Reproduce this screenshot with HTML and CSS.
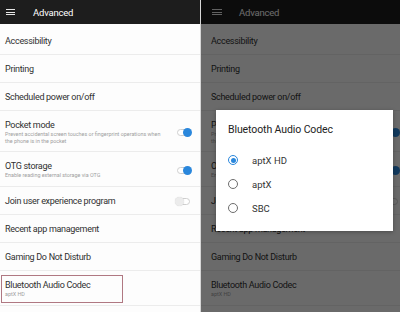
FILE: index.html
```html
<!DOCTYPE html>
<html lang="en">
<head>
    <meta charset="UTF-8">
    <title>Advanced - Bluetooth Audio Codec</title>
    <link rel="stylesheet" href="styles.css">
</head>
<body>
    <div class="shots">
        <!-- left: settings list -->
        <div class="phone">
            <div class="appbar">
                <span class="menu"><i></i><i></i><i></i></span>
                <span class="title">Advanced</span>
            </div>
            <ul class="list">
                <li class="row"><div class="text"><div class="label">Accessibility</div></div></li>
                <li class="row"><div class="text"><div class="label">Printing</div></div></li>
                <li class="row"><div class="text"><div class="label">Scheduled power on/off</div></div></li>
                <li class="row tall">
                    <div class="text">
                        <div class="label">Pocket mode</div>
                        <div class="sub">Prevent accidental screen touches or fingerprint operations when<br>the phone is in the pocket</div>
                    </div>
                    <span class="toggle on"></span>
                </li>
                <li class="row">
                    <div class="text">
                        <div class="label">OTG storage</div>
                        <div class="sub">Enable reading external storage via OTG</div>
                    </div>
                    <span class="toggle on"></span>
                </li>
                <li class="row">
                    <div class="text"><div class="label">Join user experience program</div></div>
                    <span class="toggle"></span>
                </li>
                <li class="row"><div class="text"><div class="label">Recent app management</div></div></li>
                <li class="row"><div class="text"><div class="label">Gaming Do Not Disturb</div></div></li>
                <li class="row">
                    <div class="text">
                        <div class="label">Bluetooth Audio Codec</div>
                        <div class="sub">aptX HD</div>
                    </div>
                    <span class="highlight"></span>
                </li>
            </ul>
        </div>

        <div class="split"></div>

        <!-- right: same list with the codec dialog open -->
        <div class="phone dim">
            <div class="appbar">
                <span class="menu"><i></i><i></i><i></i></span>
                <span class="title">Advanced</span>
            </div>
            <ul class="list">
                <li class="row"><div class="text"><div class="label">Accessibility</div></div></li>
                <li class="row"><div class="text"><div class="label">Printing</div></div></li>
                <li class="row"><div class="text"><div class="label">Scheduled power on/off</div></div></li>
                <li class="row tall">
                    <div class="text">
                        <div class="label">Pocket mode</div>
                        <div class="sub">Prevent accidental screen touches or fingerprint operations when<br>the phone is in the pocket</div>
                    </div>
                    <span class="toggle on"></span>
                </li>
                <li class="row">
                    <div class="text">
                        <div class="label">OTG storage</div>
                        <div class="sub">Enable reading external storage via OTG</div>
                    </div>
                    <span class="toggle on"></span>
                </li>
                <li class="row">
                    <div class="text"><div class="label">Join user experience program</div></div>
                    <span class="toggle"></span>
                </li>
                <li class="row"><div class="text"><div class="label">Recent app management</div></div></li>
                <li class="row"><div class="text"><div class="label">Gaming Do Not Disturb</div></div></li>
                <li class="row">
                    <div class="text">
                        <div class="label">Bluetooth Audio Codec</div>
                        <div class="sub">aptX HD</div>
                    </div>
                </li>
            </ul>
            <div class="scrim"></div>
            <div class="dialog">
                <div class="dialog-title">Bluetooth Audio Codec</div>
                <div class="option"><span class="radio checked"></span>aptX HD</div>
                <div class="option"><span class="radio"></span>aptX</div>
                <div class="option"><span class="radio"></span>SBC</div>
            </div>
        </div>
    </div>
</body>
</html>
```

FILE: styles.css
```css
* {
    box-sizing: border-box;
}
body {
    margin: 0;
    width: 400px;
    height: 312px;
    overflow: hidden;
    font-family: Roboto, "Liberation Sans", sans-serif;
    background: #fff;
}
.shots {
    display: flex;
    height: 312px;
}
.phone {
    position: relative;
    width: 200px;
    flex: none;
    background: #fdfdfd;
    overflow: hidden;
}
.phone.dim {
    width: 199px;
}
.split {
    width: 1px;
    background: #d6d6d6;
}
.appbar {
    height: 24px;
    background: #1d1d1d;
    color: #fff;
    display: flex;
    align-items: center;
    padding-left: 6px;
}
.menu {
    display: flex;
    flex-direction: column;
    gap: 1.5px;
    width: 9px;
    margin-right: 18px;
}
.menu i {
    display: block;
    height: 1px;
    background: #e6e6e6;
}
.title {
    font-size: 9.5px;
    letter-spacing: -0.2px;
}
.list {
    list-style: none;
    margin: 0;
    padding: 3px 0 0;
}
.row {
    position: relative;
    display: flex;
    align-items: center;
    padding: 9px 10px 7px 5px;
    border-bottom: 1px solid #ececec;
}
.row.tall {
    padding-bottom: 6px;
}
.text {
    flex: 1;
}
.label {
    font-size: 9px;
    line-height: 11px;
    color: #303030;
    letter-spacing: -0.3px;
}
.sub {
    font-size: 5.4px;
    line-height: 7px;
    color: #a0a0a0;
}
.toggle {
    position: relative;
    width: 13px;
    height: 7px;
    border: 1px solid #cfcfcf;
    border-radius: 4px;
    background: #fff;
    flex: none;
}
.toggle::after {
    content: "";
    position: absolute;
    top: -2px;
    left: -3px;
    width: 9px;
    height: 9px;
    border-radius: 50%;
    background: #ececec;
    box-shadow: 0 0 1px rgba(0,0,0,0.2);
}
.toggle.on::after {
    left: auto;
    right: -3px;
    background: #2a87dc;
    box-shadow: none;
}
.highlight {
    position: absolute;
    left: 1px;
    top: 4px;
    width: 122px;
    height: 28px;
    border: 1.5px solid #b07882;
}

/* right shot */
.dim .appbar {
    padding-left: 11px;
}
.dim .menu {
    width: 10px;
    margin-right: 17px;
}
.dim .row {
    padding-left: 10px;
    padding-right: 2px;
}
.scrim {
    position: absolute;
    inset: 0;
    background: rgba(0,0,0,0.58);
}
.dialog {
    position: absolute;
    left: 15px;
    top: 110px;
    width: 177px;
    height: 121px;
    background: #fff;
    box-shadow: 0 1px 4px rgba(0,0,0,0.3);
    padding: 14px 12px 0;
}
.dialog-title {
    font-size: 10.5px;
    line-height: 12px;
    color: #222;
    letter-spacing: -0.1px;
    margin-bottom: 12px;
}
.option {
    display: flex;
    align-items: center;
    height: 24px;
    font-size: 9.5px;
    color: #333;
}
.radio {
    width: 10px;
    height: 10px;
    border: 1.3px solid #6d6d6d;
    border-radius: 50%;
    margin-right: 14px;
    flex: none;
    display: flex;
    align-items: center;
    justify-content: center;
}
.radio.checked {
    border-color: #2a87dc;
}
.radio.checked::after {
    content: "";
    width: 5px;
    height: 5px;
    border-radius: 50%;
    background: #2a87dc;
}
```
